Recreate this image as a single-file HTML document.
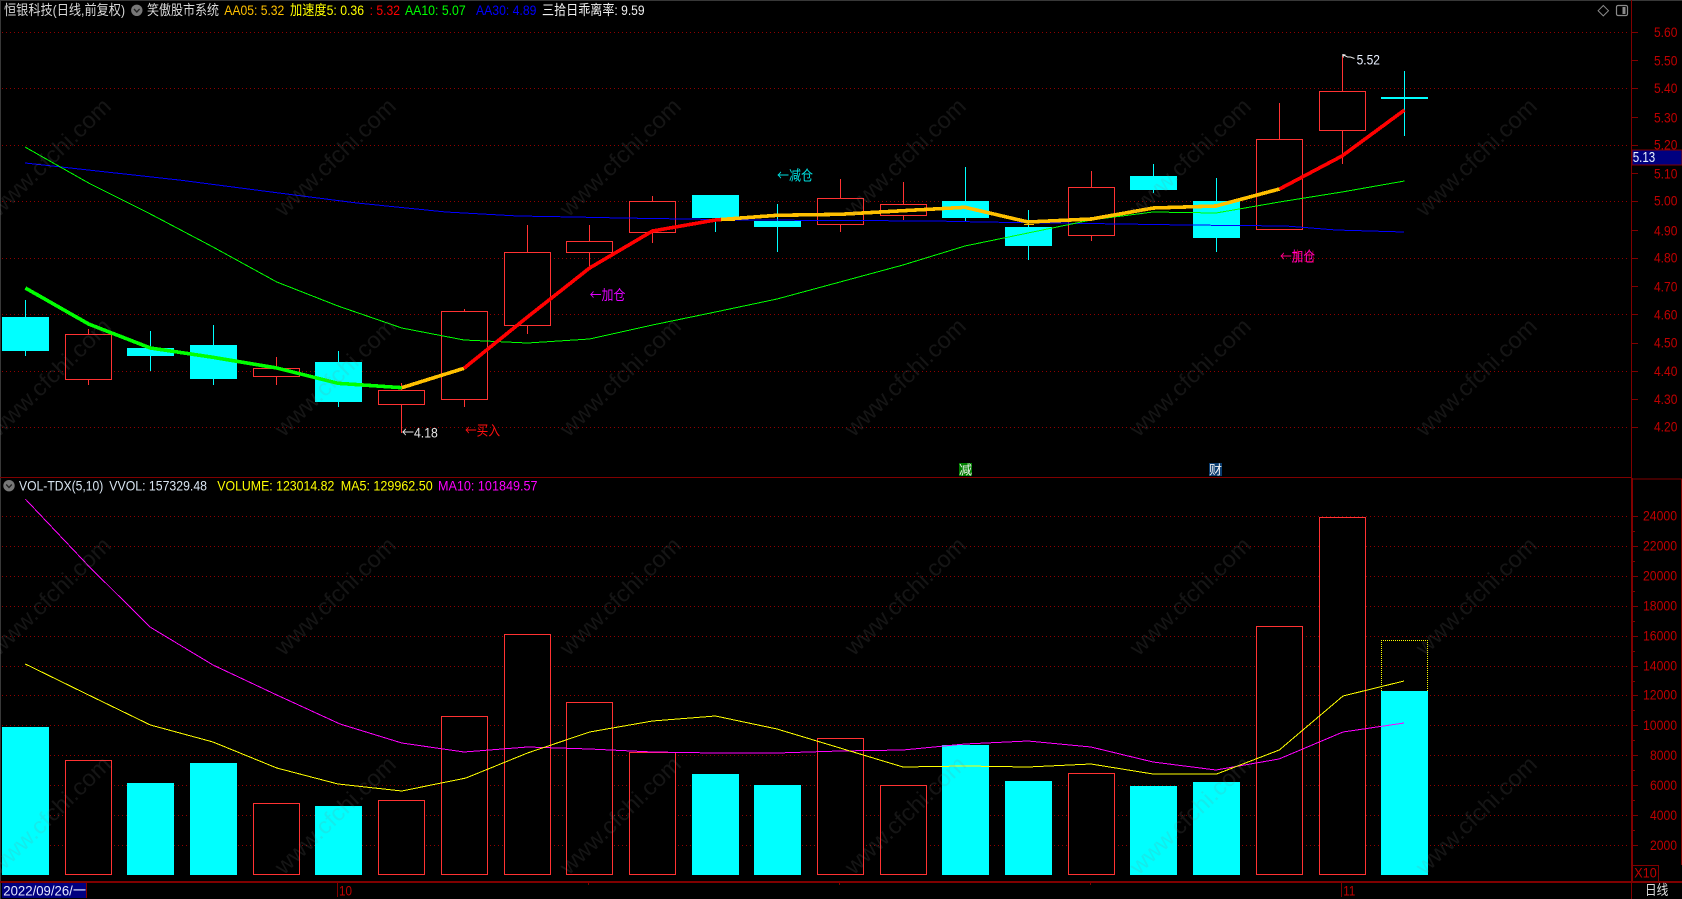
<!DOCTYPE html>
<html lang="zh">
<head>
<meta charset="utf-8">
<title>恒银科技</title>
<style>
html,body{margin:0;padding:0;background:#000;width:1682px;height:899px;overflow:hidden}
svg{display:block}
text{font-family:"Liberation Sans","Noto Sans CJK SC",sans-serif;font-size:14px}
.wm text{font-size:23px;fill:#808080;fill-opacity:.16}
.ax{fill:#c00000}
.ar{font-family:"Noto Sans CJK SC",sans-serif}
</style>
</head>
<body>
<svg xmlns="http://www.w3.org/2000/svg" width="1682" height="899" viewBox="0 0 1682 899">
<rect width="1682" height="899" fill="#000"/>

<!-- frame -->
<path d="M0 .5H1682M.5 0V899" stroke="#383838" fill="none" shape-rendering="crispEdges"/>

<!-- grid -->
<g stroke="#900000" stroke-dasharray="1 3" fill="none" shape-rendering="crispEdges">
<path d="M2 32.5H1627M2 88.5H1627M2 145.5H1627M2 201.5H1627M2 258.5H1627M2 314.5H1627M2 371.5H1627M2 427.5H1627"/>
<path d="M2 516.5H1627M2 546.5H1627M2 576.5H1627M2 606.5H1627M2 636.5H1627M2 666.5H1627M2 695.5H1627M2 725.5H1627M2 755.5H1627M2 785.5H1627M2 815.5H1627M2 845.5H1627"/>
</g>

<!-- structure lines -->
<g fill="none" stroke="#800000" shape-rendering="crispEdges">
<path d="M0 477.5H1631"/>
<path d="M1631.5 0V478"/>
<path d="M1632 478V882" stroke-width="2"/>
<path d="M1631 479H1682M1681.5 479V865"/>
<path d="M0 882H1682" stroke-width="2"/>
<path d="M1631.5 883V899"/>
<path d="M337.5 883V897M1341.5 883V897M588.5 883V885M839.5 883V885M1090.5 883V885"/>
<!-- price ticks -->
<path d="M1632 32.5h6M1632 60.5h6M1632 88.5h6M1632 117.5h6M1632 145.5h6M1632 173.5h6M1632 201.5h6M1632 230.5h6M1632 258.5h6M1632 286.5h6M1632 314.5h6M1632 343.5h6M1632 371.5h6M1632 399.5h6M1632 427.5h6"/>
<!-- vol ticks -->
<path d="M1633 516.5h5M1633 546.5h5M1633 576.5h5M1633 606.5h5M1633 636.5h5M1633 666.5h5M1633 695.5h5M1633 725.5h5M1633 755.5h5M1633 785.5h5M1633 815.5h5M1633 845.5h5"/>
<path d="M1633 531.5h2M1633 561.5h2M1633 591.5h2M1633 621.5h2M1633 651.5h2M1633 681.5h2M1633 710.5h2M1633 740.5h2M1633 770.5h2M1633 800.5h2M1633 830.5h2"/>
<!-- X10 box -->
<rect x="1632.5" y="865.5" width="26" height="16"/>
</g>

<!-- red wicks -->
<path d="M88.5 329V385M276.5 357V385M401.5 383V433M464.5 309V407M527.5 225V334M589.5 225V267M652.5 196V243M840.5 179V232M903.5 182V220M1091.5 171V241M1279.5 103V140M1342.5 56V164" stroke="#ff3232" fill="none" shape-rendering="crispEdges"/>
<!-- cyan wicks -->
<path d="M25.5 300V356M150.5 331V371M213.5 325V385M338.5 351V407M715.5 218V232M777.5 204V252M965.5 167V221M1028.5 210V260M1153.5 164V193M1216.5 178V252M1404.5 71V136" stroke="#00ffff" fill="none" shape-rendering="crispEdges"/>

<!-- red candle bodies -->
<g fill="#000" stroke="#ff3232" shape-rendering="crispEdges">
<rect x="65.5" y="334.5" width="46" height="45"/>
<rect x="253.5" y="368.5" width="46" height="8"/>
<rect x="378.5" y="390.5" width="46" height="14"/>
<rect x="441.5" y="311.5" width="46" height="88"/>
<rect x="504.5" y="252.5" width="46" height="73"/>
<rect x="566.5" y="241.5" width="46" height="11"/>
<rect x="629.5" y="201.5" width="46" height="31"/>
<rect x="817.5" y="198.5" width="46" height="26"/>
<rect x="880.5" y="204.5" width="46" height="11"/>
<rect x="1068.5" y="187.5" width="46" height="48"/>
<rect x="1256.5" y="139.5" width="46" height="90"/>
<rect x="1319.5" y="91.5" width="46" height="39"/>
</g>
<!-- cyan candle bodies -->
<g fill="#00ffff" shape-rendering="crispEdges">
<rect x="2" y="317" width="47" height="34"/>
<rect x="127" y="348" width="47" height="8"/>
<rect x="190" y="345" width="47" height="34"/>
<rect x="315" y="362" width="47" height="40"/>
<rect x="692" y="195" width="47" height="23"/>
<rect x="754" y="221" width="47" height="6"/>
<rect x="942" y="201" width="47" height="17"/>
<rect x="1005" y="227" width="47" height="19"/>
<rect x="1130" y="176" width="47" height="14"/>
<rect x="1193" y="201" width="47" height="37"/>
<rect x="1381" y="97" width="47" height="2"/>
</g>

<!-- thin MAs price -->
<g fill="none" shape-rendering="crispEdges">
<polyline stroke="#0000ff" points="25,163 61,167 179,180 279,193 357,203 446,212 518,216 574,217 621,218 685,219 746,220 935,221 981,222 1122,224 1185,225 1286,226 1336,230 1404,232"/>
<polyline stroke="#00ff00" points="25,147 88.6,183 150.4,214 213,247 276.8,282 338,306 401.8,328 464,340 527.5,343 589.6,339 652.5,325 715.4,312 777,299 840,282 903,265 965,246 1028,233 1091,220 1153,212 1216,213 1279.5,202 1342,192 1404.5,181"/>
<path d="M721 220.5H735M1024 224.5H1034" stroke="#ffc000"/>
</g>
<!-- thick AA05 -->
<g fill="none" stroke-width="3.6" stroke-linejoin="round" shape-rendering="crispEdges">
<polyline stroke="#00ff00" points="25.4,288 88.6,324 150.4,348 213,357.3 276.8,368 338,383.3 401.8,387.7"/>
<polyline stroke="#ffc000" points="401.8,387.7 464,368.3"/>
<polyline stroke="#ff0000" points="464,368.3 527.5,317 589.6,268 652.5,231 715.4,220 721,219.5"/>
<polyline stroke="#ffc000" points="721,219.5 777,215.3 840,214.3 903,210.7 965,207.3 1028,222 1091.4,219 1153.4,208 1216,206 1279.5,189"/>
<polyline stroke="#ff0000" points="1279.5,189 1342,156 1404.5,110"/>
</g>

<!-- volume bars -->
<g fill="#00ffff" shape-rendering="crispEdges">
<rect x="2" y="727" width="47" height="148"/>
<rect x="127" y="783" width="47" height="92"/>
<rect x="190" y="763" width="47" height="112"/>
<rect x="315" y="806" width="47" height="69"/>
<rect x="692" y="774" width="47" height="101"/>
<rect x="754" y="785" width="47" height="90"/>
<rect x="942" y="745" width="47" height="130"/>
<rect x="1005" y="781" width="47" height="94"/>
<rect x="1130" y="786" width="47" height="89"/>
<rect x="1193" y="782" width="47" height="93"/>
<rect x="1381" y="691" width="47" height="184"/>
</g>
<g fill="#000" stroke="#ff3232" shape-rendering="crispEdges">
<rect x="65.5" y="760.5" width="46" height="114"/>
<rect x="253.5" y="803.5" width="46" height="71"/>
<rect x="378.5" y="800.5" width="46" height="74"/>
<rect x="441.5" y="716.5" width="46" height="158"/>
<rect x="504.5" y="634.5" width="46" height="240"/>
<rect x="566.5" y="702.5" width="46" height="172"/>
<rect x="629.5" y="752.5" width="46" height="122"/>
<rect x="817.5" y="738.5" width="46" height="136"/>
<rect x="880.5" y="785.5" width="46" height="89"/>
<rect x="1068.5" y="773.5" width="46" height="101"/>
<rect x="1256.5" y="626.5" width="46" height="248"/>
<rect x="1319.5" y="517.5" width="46" height="357"/>
</g>
<path d="M1381.5 691V640.5H1427.5V691" fill="none" stroke="#ffff00" stroke-dasharray="1 1" shape-rendering="crispEdges"/>

<!-- vol MAs -->
<g fill="none" shape-rendering="crispEdges">
<polyline stroke="#ff00ff" points="25.3,499 88.6,566 150,627 213,665 276.8,695 340,724 401.8,743 464,752 527.5,747 589.6,749 652.5,752 715.4,753 777,753 840,751 903,750 965,744 1028,741 1091,747 1153,762 1216,770 1279,759 1343,732 1404,723"/>
<polyline stroke="#ffff00" points="25.3,664 88.6,695 150.4,725 213,742 276.8,768 338,784 401.8,791 466,778 527.5,753 589.6,732 652.5,721 715.4,716 777,729 840,748 903,767 965,766 1028,767 1091,764 1153,774 1216.7,774 1279.3,750 1343,696 1404,681"/>
</g>

<!-- tag 5.13 -->
<rect x="1632" y="150" width="50" height="15" fill="#000080" stroke="#800000" shape-rendering="crispEdges"/>
<text x="1632.7" y="162" fill="#e8f0ff" style="font-size:15px" textLength="22.5" lengthAdjust="spacingAndGlyphs">5.13</text>

<!-- header icons -->
<circle cx="136.8" cy="10.3" r="5.7" fill="#777"/>
<path d="M134 9l2.8 3 2.8-3" fill="none" stroke="#222" stroke-width="1.3"/>
<circle cx="9" cy="485.7" r="5.7" fill="#777"/>
<path d="M6.2 484.5l2.8 3 2.8-3" fill="none" stroke="#222" stroke-width="1.3"/>
<path d="M1603.3 5.5l5.2 5.2-5.2 5.2-5.2-5.2z" fill="none" stroke="#8a8a8a"/>
<rect x="1616.5" y="5.5" width="11" height="10" rx="1.5" fill="none" stroke="#8a8a8a" stroke-width="1.2"/>
<rect x="1622.5" y="7" width="3" height="7" fill="#8a8a8a"/>

<!-- header text -->
<g>
<text x="4" y="15" fill="#d8d8d8" textLength="121" lengthAdjust="spacingAndGlyphs">恒银科技(日线,前复权)</text>
<text x="147" y="15" fill="#d8d8d8" textLength="72" lengthAdjust="spacingAndGlyphs">笑傲股市系统</text>
<text x="224.3" y="15" fill="#ffc000" textLength="60" lengthAdjust="spacingAndGlyphs">AA05: 5.32</text>
<text x="290" y="15" fill="#ffff00" textLength="74" lengthAdjust="spacingAndGlyphs">加速度5: 0.36</text>
<text x="369.6" y="15" fill="#ff0000" textLength="30.4" lengthAdjust="spacingAndGlyphs">: 5.32</text>
<text x="405" y="15" fill="#00ff00" textLength="60.7" lengthAdjust="spacingAndGlyphs">AA10: 5.07</text>
<text x="476" y="15" fill="#0000ff" textLength="60.4" lengthAdjust="spacingAndGlyphs">AA30: 4.89</text>
<text x="542" y="15" fill="#f0f0f0" textLength="102.6" lengthAdjust="spacingAndGlyphs">三拾日乖离率: 9.59</text>
</g>
<g>
<text x="19" y="490.7" fill="#d8e4f0" textLength="84.3" lengthAdjust="spacingAndGlyphs">VOL-TDX(5,10)</text>
<text x="109.3" y="490.7" fill="#d8e4f0" textLength="97.7" lengthAdjust="spacingAndGlyphs">VVOL: 157329.48</text>
<text x="217.3" y="490.7" fill="#ffff00" textLength="117" lengthAdjust="spacingAndGlyphs">VOLUME: 123014.82</text>
<text x="340.7" y="490.7" fill="#ffff00" textLength="92" lengthAdjust="spacingAndGlyphs">MA5: 129962.50</text>
<text x="438" y="490.7" fill="#ff00ff" textLength="99.5" lengthAdjust="spacingAndGlyphs">MA10: 101849.57</text>
</g>

<!-- price axis labels -->
<g class="ax">
<text x="1654" y="37" textLength="23.4" lengthAdjust="spacingAndGlyphs">5.60</text>
<text x="1654" y="65.6" textLength="23.4" lengthAdjust="spacingAndGlyphs">5.50</text>
<text x="1654" y="92.8" textLength="23.4" lengthAdjust="spacingAndGlyphs">5.40</text>
<text x="1654" y="122.6" textLength="23.4" lengthAdjust="spacingAndGlyphs">5.30</text>
<text x="1654" y="149.6" textLength="23.4" lengthAdjust="spacingAndGlyphs">5.20</text>
<text x="1654" y="178.6" textLength="23.4" lengthAdjust="spacingAndGlyphs">5.10</text>
<text x="1654" y="205.6" textLength="23.4" lengthAdjust="spacingAndGlyphs">5.00</text>
<text x="1654" y="235.6" textLength="23.4" lengthAdjust="spacingAndGlyphs">4.90</text>
<text x="1654" y="262.6" textLength="23.4" lengthAdjust="spacingAndGlyphs">4.80</text>
<text x="1654" y="291.6" textLength="23.4" lengthAdjust="spacingAndGlyphs">4.70</text>
<text x="1654" y="319.6" textLength="23.4" lengthAdjust="spacingAndGlyphs">4.60</text>
<text x="1654" y="347.6" textLength="23.4" lengthAdjust="spacingAndGlyphs">4.50</text>
<text x="1654" y="376.2" textLength="23.4" lengthAdjust="spacingAndGlyphs">4.40</text>
<text x="1654" y="404.2" textLength="23.4" lengthAdjust="spacingAndGlyphs">4.30</text>
<text x="1654" y="431.7" textLength="23.4" lengthAdjust="spacingAndGlyphs">4.20</text>
</g>
<!-- vol axis labels -->
<g class="ax">
<text x="1643" y="520.7" textLength="34" lengthAdjust="spacingAndGlyphs">24000</text>
<text x="1643" y="550.7" textLength="34" lengthAdjust="spacingAndGlyphs">22000</text>
<text x="1643" y="580.7" textLength="34" lengthAdjust="spacingAndGlyphs">20000</text>
<text x="1643" y="610.7" textLength="34" lengthAdjust="spacingAndGlyphs">18000</text>
<text x="1643" y="640.7" textLength="34" lengthAdjust="spacingAndGlyphs">16000</text>
<text x="1643" y="670.7" textLength="34" lengthAdjust="spacingAndGlyphs">14000</text>
<text x="1643" y="699.7" textLength="34" lengthAdjust="spacingAndGlyphs">12000</text>
<text x="1643" y="730.2" textLength="34" lengthAdjust="spacingAndGlyphs">10000</text>
<text x="1650" y="760.2" textLength="27" lengthAdjust="spacingAndGlyphs">8000</text>
<text x="1650" y="790.2" textLength="27" lengthAdjust="spacingAndGlyphs">6000</text>
<text x="1650" y="820.2" textLength="27" lengthAdjust="spacingAndGlyphs">4000</text>
<text x="1650" y="850.2" textLength="27" lengthAdjust="spacingAndGlyphs">2000</text>
<text x="1634.3" y="877.7" textLength="22.4" lengthAdjust="spacingAndGlyphs">X10</text>
</g>

<!-- date bar -->
<rect x="2" y="883" width="84" height="15" fill="#000080" shape-rendering="crispEdges"/>
<path d="M86.5 883V898" stroke="#800000" shape-rendering="crispEdges"/>
<text x="3.3" y="895.3" fill="#e4e8ff" textLength="82.7" lengthAdjust="spacingAndGlyphs">2022/09/26/一</text>
<text x="339" y="895.7" class="ax" textLength="13" lengthAdjust="spacingAndGlyphs">10</text>
<text x="1343.3" y="895.7" class="ax" textLength="12" lengthAdjust="spacingAndGlyphs">11</text>
<text x="1645" y="895" fill="#dcdcdc" textLength="23.3" lengthAdjust="spacingAndGlyphs">日线</text>

<!-- annotations -->
<text x="777" y="180.5" fill="#00e0e0" textLength="36" lengthAdjust="spacingAndGlyphs"><tspan class="ar">←</tspan>减仓</text>
<text x="589.6" y="300" fill="#e000ff" textLength="35.8" lengthAdjust="spacingAndGlyphs"><tspan class="ar">←</tspan>加仓</text>
<text x="465" y="435.5" fill="#ff1010" textLength="35" lengthAdjust="spacingAndGlyphs"><tspan class="ar">←</tspan>买入</text>
<text x="401.8" y="437.5" fill="#e4e4e4" textLength="36" lengthAdjust="spacingAndGlyphs"><tspan class="ar">←</tspan>4.18</text>
<text x="1280" y="261.5" fill="#ff00e0" textLength="35" lengthAdjust="spacingAndGlyphs"><tspan class="ar">←</tspan>加仓</text>
<text x="1280" y="261.5" fill="#ff0040" fill-opacity=".6" textLength="35" lengthAdjust="spacingAndGlyphs"><tspan class="ar">←</tspan>卖出</text>
<path d="M1342.5 54.5l1 3M1342.5 54.5l3 0.5M1342.5 54.5l5 2.5l3 0l4 1.5" fill="none" stroke="#e8e8e8"/>
<text x="1356.6" y="64.7" fill="#e8f0ff" textLength="23.3" lengthAdjust="spacingAndGlyphs">5.52</text>

<!-- event badges -->
<rect x="959" y="463" width="13" height="13" fill="#008000"/>
<text x="959" y="474.5" fill="#f0f0f0" style="font-size:13px" textLength="13" lengthAdjust="spacingAndGlyphs">减</text>
<rect x="1209" y="463" width="13" height="13" fill="#0a3d70"/>
<text x="1209" y="474.5" fill="#f0f0f0" style="font-size:13px" textLength="13" lengthAdjust="spacingAndGlyphs">财</text>

<!-- watermark -->
<g class="wm">
<text transform="translate(50 157) rotate(-44)" text-anchor="middle" y="8" textLength="158" lengthAdjust="spacingAndGlyphs">www.cfchi.com</text>
<text transform="translate(335 157) rotate(-44)" text-anchor="middle" y="8" textLength="158" lengthAdjust="spacingAndGlyphs">www.cfchi.com</text>
<text transform="translate(620 157) rotate(-44)" text-anchor="middle" y="8" textLength="158" lengthAdjust="spacingAndGlyphs">www.cfchi.com</text>
<text transform="translate(905 157) rotate(-44)" text-anchor="middle" y="8" textLength="158" lengthAdjust="spacingAndGlyphs">www.cfchi.com</text>
<text transform="translate(1190 157) rotate(-44)" text-anchor="middle" y="8" textLength="158" lengthAdjust="spacingAndGlyphs">www.cfchi.com</text>
<text transform="translate(1476 157) rotate(-44)" text-anchor="middle" y="8" textLength="158" lengthAdjust="spacingAndGlyphs">www.cfchi.com</text>
<text transform="translate(50 377) rotate(-44)" text-anchor="middle" y="8" textLength="158" lengthAdjust="spacingAndGlyphs">www.cfchi.com</text>
<text transform="translate(335 377) rotate(-44)" text-anchor="middle" y="8" textLength="158" lengthAdjust="spacingAndGlyphs">www.cfchi.com</text>
<text transform="translate(620 377) rotate(-44)" text-anchor="middle" y="8" textLength="158" lengthAdjust="spacingAndGlyphs">www.cfchi.com</text>
<text transform="translate(905 377) rotate(-44)" text-anchor="middle" y="8" textLength="158" lengthAdjust="spacingAndGlyphs">www.cfchi.com</text>
<text transform="translate(1190 377) rotate(-44)" text-anchor="middle" y="8" textLength="158" lengthAdjust="spacingAndGlyphs">www.cfchi.com</text>
<text transform="translate(1476 377) rotate(-44)" text-anchor="middle" y="8" textLength="158" lengthAdjust="spacingAndGlyphs">www.cfchi.com</text>
<text transform="translate(50 596) rotate(-44)" text-anchor="middle" y="8" textLength="158" lengthAdjust="spacingAndGlyphs">www.cfchi.com</text>
<text transform="translate(335 596) rotate(-44)" text-anchor="middle" y="8" textLength="158" lengthAdjust="spacingAndGlyphs">www.cfchi.com</text>
<text transform="translate(620 596) rotate(-44)" text-anchor="middle" y="8" textLength="158" lengthAdjust="spacingAndGlyphs">www.cfchi.com</text>
<text transform="translate(905 596) rotate(-44)" text-anchor="middle" y="8" textLength="158" lengthAdjust="spacingAndGlyphs">www.cfchi.com</text>
<text transform="translate(1190 596) rotate(-44)" text-anchor="middle" y="8" textLength="158" lengthAdjust="spacingAndGlyphs">www.cfchi.com</text>
<text transform="translate(1476 596) rotate(-44)" text-anchor="middle" y="8" textLength="158" lengthAdjust="spacingAndGlyphs">www.cfchi.com</text>
<text transform="translate(50 815) rotate(-44)" text-anchor="middle" y="8" textLength="158" lengthAdjust="spacingAndGlyphs">www.cfchi.com</text>
<text transform="translate(335 815) rotate(-44)" text-anchor="middle" y="8" textLength="158" lengthAdjust="spacingAndGlyphs">www.cfchi.com</text>
<text transform="translate(620 815) rotate(-44)" text-anchor="middle" y="8" textLength="158" lengthAdjust="spacingAndGlyphs">www.cfchi.com</text>
<text transform="translate(905 815) rotate(-44)" text-anchor="middle" y="8" textLength="158" lengthAdjust="spacingAndGlyphs">www.cfchi.com</text>
<text transform="translate(1190 815) rotate(-44)" text-anchor="middle" y="8" textLength="158" lengthAdjust="spacingAndGlyphs">www.cfchi.com</text>
<text transform="translate(1476 815) rotate(-44)" text-anchor="middle" y="8" textLength="158" lengthAdjust="spacingAndGlyphs">www.cfchi.com</text>
</g>
</svg>
</body>
</html>
